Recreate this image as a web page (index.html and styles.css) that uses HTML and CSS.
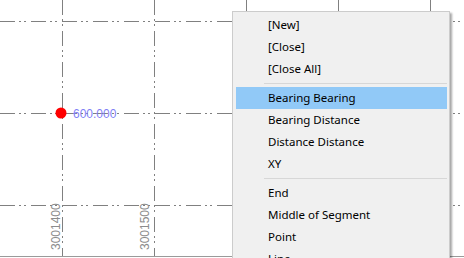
FILE: index.html
```html
<!DOCTYPE html>
<html>

<head>
  <meta name="viewport" content="width=device-width, initial-scale=1">
  <link rel="stylesheet" href="styles.css">
</head>

<body>

  <div class="view">
    <svg class="drawing" width="464" height="258" viewBox="0 0 464 258">
      <g class="grid">
        <line x1="0" y1="21.5" x2="464" y2="21.5" />
        <line x1="0" y1="113.5" x2="464" y2="113.5" />
        <line x1="0" y1="205.5" x2="464" y2="205.5" />
        <line x1="62.5" y1="0" x2="62.5" y2="256" />
        <line x1="154.5" y1="0" x2="154.5" y2="256" />
        <line x1="246.5" y1="0" x2="246.5" y2="256" />
        <line x1="338.5" y1="0" x2="338.5" y2="256" />
        <line x1="430.5" y1="0" x2="430.5" y2="256" />
      </g>
      <line class="extent" x1="232.5" y1="205" x2="232.5" y2="256" />
      <line class="baseline" x1="0" y1="256.5" x2="464" y2="256.5" />

      <circle class="pin" cx="61" cy="113" r="5.5" />
      <text class="value" x="73" y="118">600.000</text>

      <text class="coord" transform="translate(60 250) rotate(-90)">3001400</text>
      <text class="coord" transform="translate(148.5 250) rotate(-90)">3001500</text>
    </svg>

    <div class="menu">
      <div class="item">[New]</div>
      <div class="item">[Close]</div>
      <div class="item">[Close All]</div>
      <div class="sep"></div>
      <div class="item active">Bearing Bearing</div>
      <div class="item">Bearing Distance</div>
      <div class="item">Distance Distance</div>
      <div class="item">XY</div>
      <div class="sep"></div>
      <div class="item">End</div>
      <div class="item">Middle of Segment</div>
      <div class="item">Point</div>
      <div class="item">Line</div>
    </div>
  </div>

</body>

</html>
```

FILE: styles.css
```css
body {
  margin: 0;
  background: #fff;
  font-family: "Noto Sans", "Open Sans", sans-serif;
  overflow: hidden;
}

.view {
  position: relative;
  width: 464px;
  height: 258px;
  overflow: hidden;
}

.drawing {
  display: block;
}

.grid line {
  stroke: #808080;
  stroke-width: 1;
  stroke-dasharray: 15 4 2 3 2 5;
}

.extent {
  stroke: #808080;
  stroke-dasharray: 5 3;
}

.baseline {
  stroke: #9a9a9a;
}

.pin {
  fill: #ff0000;
}

.value {
  font-family: "Liberation Sans", Arial, sans-serif;
  font-size: 12px;
  fill: #7f7ff6;
}

.coord {
  font-family: "Liberation Sans", Arial, sans-serif;
  font-size: 12px;
  fill: #8c8c8c;
}

/* context menu over the drawing */
.menu {
  position: absolute;
  left: 232px;
  top: 11px;
  width: 211px;
  padding: 2px 2px 2px 3px;
  background: #f0f0f0;
  border: 1px solid #cccccc;
  box-shadow: 2px 2px 2px rgba(0, 0, 0, 0.35);
}

.item {
  height: 22px;
  line-height: 22px;
  padding-left: 32px;
  font-size: 11.5px;
  color: #000;
  white-space: nowrap;
}

.item.active {
  background: #91c9f7;
}

.sep {
  height: 1px;
  margin: 3px 0 3px 28px;
  background: #d7d7d7;
}
```
